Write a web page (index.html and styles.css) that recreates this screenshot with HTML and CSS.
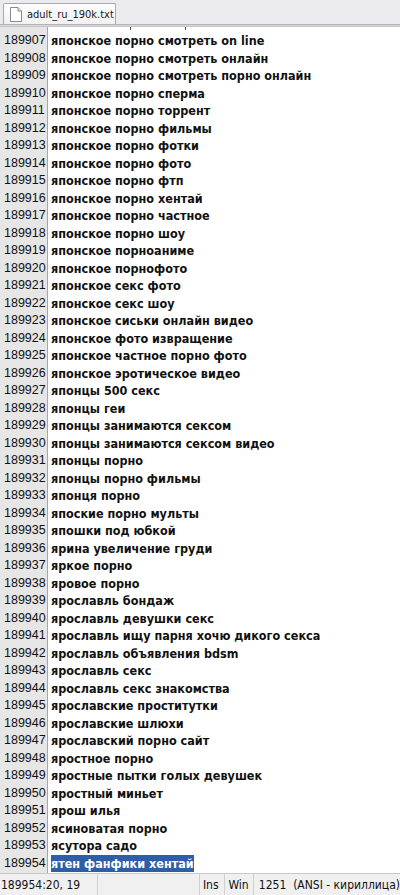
FILE: index.html
```html
<!DOCTYPE html>
<html>
<head>
<meta charset="utf-8">
<link rel="stylesheet" href="styles.css">
</head>
<body>
<div class="window">
  <div class="tabbar">
    <div class="tab">
      <svg class="doc" width="12" height="15" viewBox="0 0 12 15">
        <path d="M0.5 0.5 H8 L11.5 4 V14.5 H0.5 Z" fill="#fff" stroke="#8a8a8a"/>
        <path d="M8 0.5 V4 H11.5" fill="#e6e6e6" stroke="#8a8a8a"/>
      </svg>
      <span class="tabname">adult_ru_190k.txt</span>
    </div>
  </div>
  <div class="editor">
    <div class="ticks"><i class="t1"></i><i class="t2"></i></div>
    <div class="gutter" id="g"></div>
    <div class="text" id="t"></div>
  </div>
  <div class="status">
    <div class="sec s1">189954:20, 19</div>
    <div class="sec s2"></div>
    <div class="sec s3">Ins</div>
    <div class="sec s4">Win</div>
    <div class="sec s5">1251&nbsp; (ANSI - кириллица)</div>
  </div>
</div>
<script>
var lines = [
"японское порно смотреть on line",
"японское порно смотреть онлайн",
"японское порно смотреть порно онлайн",
"японское порно сперма",
"японское порно торрент",
"японское порно фильмы",
"японское порно фотки",
"японское порно фото",
"японское порно фтп",
"японское порно хентай",
"японское порно частное",
"японское порно шоу",
"японское порноаниме",
"японское порнофото",
"японское секс фото",
"японское секс шоу",
"японское сиськи онлайн видео",
"японское фото извращение",
"японское частное порно фото",
"японское эротическое видео",
"японцы 500 секс",
"японцы геи",
"японцы занимаются сексом",
"японцы занимаются сексом видео",
"японцы порно",
"японцы порно фильмы",
"японця порно",
"япоские порно мульты",
"япошки под юбкой",
"ярина увеличение груди",
"яркое порно",
"яровое порно",
"ярославль бондаж",
"ярославль девушки секс",
"ярославль ищу парня хочю дикого секса",
"ярославль объявления bdsm",
"ярославль секс",
"ярославль секс знакомства",
"ярославские проститутки",
"ярославские шлюхи",
"ярославский порно сайт",
"яростное порно",
"яростные пытки голых девушек",
"яростный миньет",
"ярош илья",
"ясиноватая порно",
"ясутора садо",
"ятен фанфики хентай"
];
var g = document.getElementById('g'), t = document.getElementById('t');
lines.forEach(function (s, i) {
  var n = document.createElement('div');
  n.className = 'num';
  n.textContent = 189907 + i;
  g.appendChild(n);
  var l = document.createElement('div');
  l.className = 'line';
  if (i === lines.length - 1) {
    var sp = document.createElement('span');
    sp.className = 'sel';
    sp.textContent = s;
    l.appendChild(sp);
  } else {
    l.textContent = s;
  }
  t.appendChild(l);
});
</script>
</body>
</html>
```
FILE: styles.css
```css
html, body {
  margin: 0;
  padding: 0;
  background: #fff;
}
.window {
  width: 400px;
  height: 895px;
  display: flex;
  flex-direction: column;
  overflow: hidden;
  font-family: "DejaVu Sans", sans-serif;
}
.tabbar {
  height: 24px;
  background: #ebebef;
  border-bottom: 1px solid #b4b4b8;
  box-shadow: 0 1px 0 #d8d8dc, 0 2px 0 #c6c6ca;
  display: flex;
  align-items: flex-end;
  padding-left: 3px;
  flex: none;
}
.tab {
  height: 21px;
  width: 113px;
  box-sizing: border-box;
  background: linear-gradient(#fdfdfd, #f1f1f3);
  border: 1px solid #a9a9ad;
  border-bottom: none;
  border-radius: 2px 2px 0 0;
  display: flex;
  align-items: center;
  padding-left: 6px;
  gap: 5px;
}
.tabname {
  font-size: 11px;
  font-stretch: condensed;
  color: #1a1a1a;
  white-space: nowrap;
}
.editor {
  flex: 1;
  display: flex;
  position: relative;
  padding-top: 5px;
  margin-top: 2px;
}
.ticks i {
  position: absolute;
  top: 0;
  width: 1px;
  height: 3px;
  background: #555;
}
.ticks .t1 { left: 130px; }
.ticks .t2 { left: 185px; }
.gutter {
  width: 48px;
  background: #e6e6e6;
  border-right: 1px solid #a6a6a6;
  box-sizing: border-box;
  margin-top: -5px;
  padding-top: 5px;
  flex: none;
}
.num, .line {
  height: 17.5px;
  line-height: 17.5px;
  white-space: nowrap;
}
.num {
  font-family: "Liberation Sans", Arial, sans-serif;
  font-size: 12.5px;
  color: #111;
  padding-left: 4px;
}
.text {
  padding-left: 3px;
  font-family: "DejaVu Sans Condensed", "DejaVu Sans", sans-serif;
  font-stretch: condensed;
  font-size: 12.5px;
  font-weight: bold;
  color: #111;
}
.sel {
  background: #2d5ea8;
  color: #fff;
  display: inline-block;
  height: 17px;
  line-height: 17px;
}
.status {
  height: 21px;
  flex: none;
  background: #f0f0f0;
  border-top: 1px solid #c8c8c8;
  display: flex;
  font-size: 12px;
  font-stretch: condensed;
  color: #111;
  white-space: nowrap;
}
.sec {
  box-sizing: border-box;
  height: 100%;
  display: flex;
  align-items: center;
  padding-left: 3px;
  border-right: 1px solid #d0d0d0;
}
.s1 { width: 105px; padding-left: 1px; }
.s2 { width: 108px; }
.s3 { width: 27px; }
.s4 { width: 30px; }
.s5 { flex: 1; border-right: none; padding-left: 5px; }
```
